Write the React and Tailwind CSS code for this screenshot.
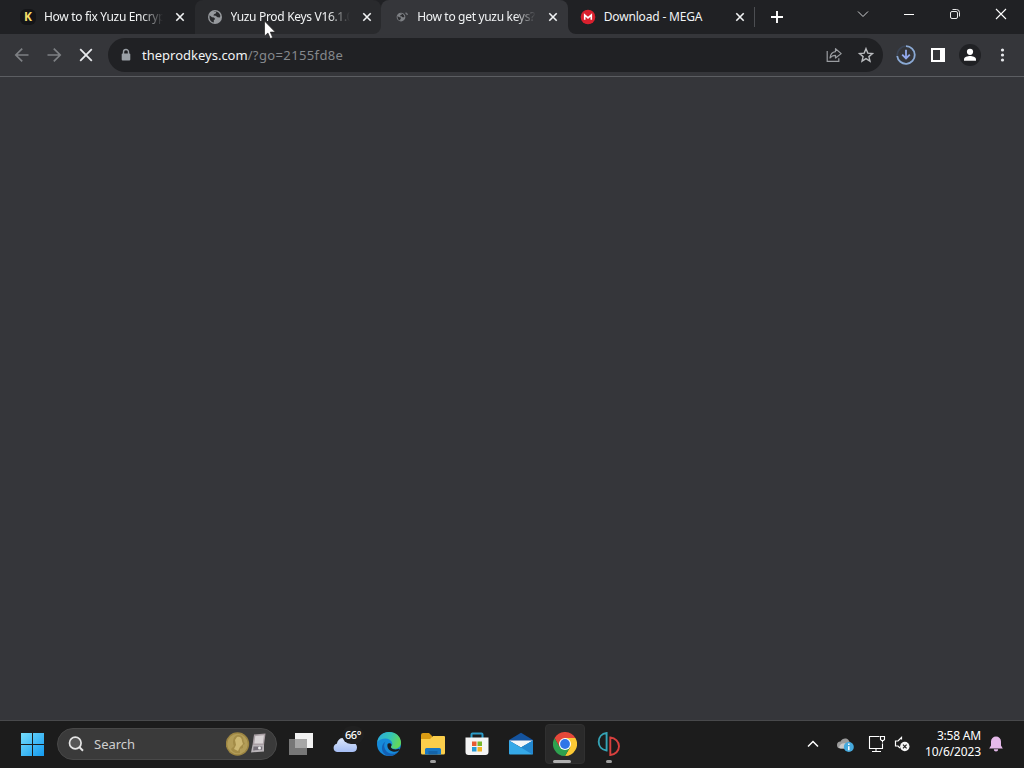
import React from 'react';

const tabs = [
  { title: 'How to fix Yuzu Encryption', icon: 'k' },
  { title: 'Yuzu Prod Keys V16.1.0', icon: 'globe', hover: true },
  { title: 'How to get yuzu keys?', icon: 'loading', active: true },
  { title: 'Download - MEGA', icon: 'mega' },
];

const Globe = ({ className }) => (
  <svg className={className} viewBox="0 0 16 16">
    <circle cx="8" cy="8" r="7" fill="#96999d" />
    <path d="M2.600 6.200 5 8.200l2 .2 1.200 1.500-1.400 1.400v2.200C3.800 13 2 10.500 2.600 6.200z" fill="#292a2d" />
    <path d="M6.500 2.800 9.200 2.800 9 4.200 7 5.200 6.400 6.600 8.600 6.800 10.500 8.300 12.800 8.500 13.400 7C13 4.800 11 2.500 8 2.300z" fill="#292a2d" />
  </svg>
);

const TabIcon = ({ name }) => {
  if (name === 'k') {
    return (
      <span className="w-4 h-4 rounded-md bg-[#141518] text-[#f3dc68] text-[12px] leading-4 font-bold text-center">K</span>
    );
  }
  if (name === 'globe') return <Globe className="w-4 h-4" />;
  if (name === 'loading') {
    return (
      <span className="w-4 h-4 pl-[3px] flex items-center opacity-75">
        <Globe className="w-[10px] h-[10px] shrink-0" />
        <svg className="w-[4px] h-4 shrink-0 -ml-px" viewBox="0 0 4 16">
          <path d="M.5 4q1.500 .3 1.900 2" fill="none" stroke="#8a8d91" strokeWidth="1.300" />
        </svg>
      </span>
    );
  }
  return (
    <svg className="w-4 h-4" viewBox="0 0 16 16">
      <circle cx="8" cy="8" r="7.300" fill="#d9202e" />
      <path d="M4.700 10.700V6L8 8.900 11.300 6v4.700" fill="none" stroke="#fff" strokeWidth="1.600" />
    </svg>
  );
};

const Tab = ({ tab }) => (
  <div
    className={`relative w-[186.600px] h-[34px] flex items-center pl-3 shrink-0 ${
      tab.active ? 'bg-[#35363a] rounded-t-lg' : tab.hover ? 'bg-[#292a2d] rounded-t-lg' : ''
    }`}
  >
    <TabIcon name={tab.icon} />
    <span
      className={`ml-2 w-[119px] overflow-hidden whitespace-nowrap text-[12px] leading-4 text-[#f1f3f4] ${
        tab.icon === 'mega'
          ? 'tracking-[-0.18px]'
          : 'tracking-[-0.32px] [mask-image:linear-gradient(to_right,#000_82%,transparent)]'
      }`}
    >
      {tab.title}
    </span>
    <svg className="ml-[9px] w-4 h-4" viewBox="0 0 16 16">
      <path d="m4.300 4.300 7.400 7.400m0-7.400-7.400 7.400" stroke="#f1f3f4" strokeWidth="1.600" />
    </svg>
    {tab.active && (
      <>
        <svg className="absolute -left-2 bottom-0 w-2 h-2" viewBox="0 0 8 8">
          <path d="M8 0v8H0a8 8 0 0 0 8-8z" fill="#35363a" />
        </svg>
        <svg className="absolute -right-2 bottom-0 w-2 h-2" viewBox="0 0 8 8">
          <path d="M0 0v8h8a8 8 0 0 1-8-8z" fill="#35363a" />
        </svg>
      </>
    )}
  </div>
);

const WindowButtons = () => (
  <div className="ml-auto flex h-7">
    <svg className="w-[46px] h-7" viewBox="0 0 46 28" fill="none" stroke="#d0d1d3">
      <path d="m18 11.500 5 5 5-5" />
    </svg>
    <svg className="w-[46px] h-7" viewBox="0 0 46 28" fill="none" stroke="#fff">
      <path d="M18 14.500h10" />
    </svg>
    <svg className="w-[46px] h-7" viewBox="0 0 46 28" fill="none" stroke="#e8e8e8">
      <rect x="18.500" y="11.500" width="7" height="7" rx="1.500" />
      <path d="M20.500 9.500h4a3 3 0 0 1 3 3v4" />
    </svg>
    <svg className="w-[46px] h-7" viewBox="0 0 46 28" fill="none" stroke="#fff">
      <path d="m18 9 10 10m0-10-10 10" strokeWidth="1.100" />
    </svg>
  </div>
);

const Toolbar = () => (
  <div className="h-[43px] flex items-center pl-1.5 pr-1.5 bg-[#35363a] border-b border-[#5c5e62]">
    <svg className="w-8 h-8" viewBox="0 0 32 32" fill="none" stroke="#7e8084" strokeWidth="1.700">
      <path d="M22.500 16H9.800m6.400-6.400L9.800 16l6.400 6.400" />
    </svg>
    <svg className="w-8 h-8" viewBox="0 0 32 32" fill="none" stroke="#7e8084" strokeWidth="1.700">
      <path d="M9.500 16h12.700m-6.400-6.400 6.400 6.400-6.400 6.400" />
    </svg>
    <svg className="w-8 h-8" viewBox="0 0 32 32" fill="none" stroke="#e8eaed" strokeWidth="1.800">
      <path d="m10.200 10.200 11.600 11.600m0-11.600L10.200 21.800" />
    </svg>

    <div className="ml-1.5 w-[775px] h-[34px] rounded-full bg-[#202124] flex items-center pl-2.5 pr-[1px]">
      <svg className="w-4 h-4" viewBox="0 0 16 16">
        <rect x="3.700" y="6.400" width="8.600" height="7.200" rx="1" fill="#9aa0a6" />
        <path d="M5.500 7V5a2.500 2.500 0 0 1 5 0v2" fill="none" stroke="#9aa0a6" strokeWidth="1.400" />
      </svg>
      <div className="ml-2 flex text-[13px] leading-5 whitespace-nowrap">
        <span className="text-[#f1f3f4]">theprodkeys.com</span>
        <span className="text-[#85888c] tracking-[0.38px]">/?go=2155fd8e</span>
      </div>
      <svg className="ml-auto w-8 h-8" viewBox="0 0 32 32" fill="none" stroke="#9a9da1" strokeWidth="1.200">
        <path d="M9.200 12v10.300h11.600v-3" />
        <path d="M17.500 9.700 23.200 14.600 17.500 19v-2.700c-2.600 0-4.100.8-5.500 2.700.4-3.800 2.300-6 5.500-6.400z" strokeLinejoin="round" />
      </svg>
      <svg className="w-8 h-8" viewBox="0 0 32 32" fill="none" stroke="#b9bbbe" strokeWidth="1.400">
        <path d="m16 9.700 1.800 4.400 4.700.4-3.600 3.100 1.100 4.600-4-2.500-4 2.500 1.100-4.600-3.600-3.100 4.700-.4z" />
      </svg>
    </div>

    <div className="ml-auto flex">
      <svg className="w-8 h-8" viewBox="0 0 32 32" fill="none">
        <circle cx="16" cy="16" r="8.800" stroke="#3b4454" strokeWidth="1.800" />
        <path d="M16 7.200A8.800 8.800 0 1 1 7.200 17" stroke="#8ba9d3" strokeWidth="1.800" />
        <path d="M16 10.800v8.400m-3.800-3.600 3.800 3.800 3.800-3.800" stroke="#93a9ee" strokeWidth="1.800" />
      </svg>
      <svg className="w-8 h-8" viewBox="0 0 32 32">
        <path fillRule="evenodd" d="M9 9h14v14H9zM11 11v10h7V11z" fill="#fff" />
      </svg>
      <svg className="w-8 h-8" viewBox="0 0 32 32">
        <circle cx="16" cy="16" r="11" fill="#202124" />
        <circle cx="16" cy="12.800" r="3.100" fill="#fff" />
        <path d="M10 21.800v-1.500c0-2 3.600-3.200 6-3.200s6 1.200 6 3.200v1.500z" fill="#fff" />
      </svg>
      <svg className="w-8 h-8" viewBox="0 0 32 32" fill="#e8eaed">
        <circle cx="16.500" cy="11" r="1.600" />
        <circle cx="16.500" cy="16" r="1.600" />
        <circle cx="16.500" cy="21" r="1.600" />
      </svg>
    </div>
  </div>
);

const SearchBox = () => (
  <div className="ml-3 w-[220px] h-8 rounded-full bg-[#3a3a3a] border border-[#484848] flex items-center pl-[9px] pr-2">
    <svg className="w-[18px] h-[18px]" viewBox="0 0 18 18" fill="none" stroke="#e6e6e6" strokeWidth="1.700">
      <circle cx="8.300" cy="8" r="5.800" fill="#565656" />
      <path d="m12.500 12.300 3.500 3.500" strokeWidth="2" />
    </svg>
    <span className="ml-[9px] text-[13px] leading-5 text-[#cfcfcf]">Search</span>
    <svg className="ml-auto w-[42px] h-[26px]" viewBox="0 0 42 26">
      <circle cx="11.500" cy="13" r="11.700" fill="#9c8542" />
      <circle cx="11.500" cy="13" r="10.300" fill="#b39d58" />
      <path d="M12 4c4 0 6 3 5.500 6l1.500 3-2 1v3l-3 1v4c-4 1-8-1-9-4l3-3c-2-4-1-10 4-11z" fill="#a38c48" />
      <path d="M11 6c3-1 5 1 5 4l1 3-3 3-2 4-4-2 2-4-1-5z" fill="#cdb873" />
      <path d="M28 3.500 39.500 2.500 38 14H26.500z" fill="#a99fa4" />
      <path d="m29.300 5 8.600-.8-1 8.400h-8.600z" fill="#d8d3d5" />
      <path d="m26.500 14 11.500 0 0 6.500-13 1z" fill="#b9b4b8" />
      <path d="m27.500 15.500 8.800 0-.2 3.300-9 .6z" fill="#77717a" />
      <circle cx="33.500" cy="17" r="1.500" fill="#eee" />
    </svg>
  </div>
);

const AppCell = ({ children, active, running }) => (
  <div className="relative w-11 h-[46px] flex items-center justify-center">
    <div
      className={`w-10 h-10 flex items-center justify-center rounded ${
        active ? 'bg-[#2a2a2a] border border-[#303030]' : ''
      }`}
    >
      {children}
    </div>
    {active && <span className="absolute bottom-[4px] left-[10px] w-[18px] h-[3px] rounded-full bg-[#b0b0b0]" />}
    {running && <span className="absolute bottom-[4px] left-[19px] w-[6px] h-[3px] rounded-full bg-[#a0a0a0]" />}
  </div>
);

const TaskbarApps = () => (
  <div className="ml-0.5 flex">
    <AppCell>
      <svg className="w-6 h-6" viewBox="0 0 24 24">
        <path d="M6 1h18v15H6z" fill="#f2f2f2" />
        <path d="M0 7h18v16H0z" fill="#777" />
        <path d="M6 7h12v9H6z" fill="#a6a6a6" />
      </svg>
    </AppCell>
    <AppCell>
      <svg className="w-6 h-6" viewBox="0 0 24 24">
        <defs>
          <linearGradient id="cloud" x1="0" y1="0" x2="0" y2="1">
            <stop offset="0" stopColor="#dce7fb" />
            <stop offset="1" stopColor="#a5bdf4" />
          </linearGradient>
        </defs>
        <path d="M4 20a4.200 4.200 0 0 1-.2-8.200C5 6 10 4.500 14 7.500c1 1 1.700 2 2 3.500 5-1.500 8 1 8 4.500 0 3-2 4.500-4.500 4.500z" fill="url(#cloud)" />
      </svg>
      <span className="absolute left-[19px] top-[5px] w-[22px] h-[18px] rounded-full bg-[#202020] text-white text-[11px] leading-[18px] text-center font-medium tracking-[-0.4px]">
        66°
      </span>
    </AppCell>
    <AppCell>
      <svg className="w-6 h-6" viewBox="0 0 24 24">
        <defs>
          <linearGradient id="edgeTop" x1="0" y1="0" x2="1" y2=".3">
            <stop offset="0" stopColor="#2ba9e0" />
            <stop offset=".6" stopColor="#35c5b2" />
            <stop offset="1" stopColor="#62d65b" />
          </linearGradient>
        </defs>
        <circle cx="12" cy="12" r="12" fill="#168ada" />
        <path d="M.3 10C1 4 6 0 12 0c7 0 12 4.800 12 10.500 0 4-3 6.300-6.500 6.300-2.500 0-4-1-3.500-2.300 1-1 1.500-2 1.200-3.500C14.500 8 11.500 6.500 8.500 6.500 5 6.500 2 8 .3 10z" fill="url(#edgeTop)" />
        <path d="M8.700 9.500C6 12 7 18 11 20.500c4 2.500 8.500 1.300 11.300-2.300C20 22 16.500 24 12.300 24 7 23.500 4.500 19 5 15c.3-2.500 1.700-4.500 3.700-5.500z" fill="#1460b5" />
        <path d="M10.600 12c-1 3.500 1.500 6.800 5 7.500 3 .6 5 0 6.800-1.500.6-1-.1-1.500-1-1-3 1-6.500.3-7.400-1.500-.4-1 .6-1.600.6-2.800-.8-1.700-3.400-1.800-4-.7z" fill="#1b1d20" />
      </svg>
    </AppCell>
    <AppCell running>
      <svg className="w-6 h-6" viewBox="0 0 24 24">
        <path d="M0 3a2 2 0 0 1 2-2h6l3 3v4H0z" fill="#d99b13" />
        <path d="M0 7h9l3-3h11a1 1 0 0 1 1 1v16a1.500 1.500 0 0 1-1.500 1.500h-21A1.500 1.500 0 0 1 0 21z" fill="#fbce4b" />
        <path d="M4 22.500v-5A1.500 1.500 0 0 1 5.500 16h13a1.500 1.500 0 0 1 1.500 1.500v5z" fill="#1877c4" />
        <path d="M7.500 19h9v3.500h-9z" fill="#1464a9" />
      </svg>
    </AppCell>
    <AppCell>
      <svg className="w-6 h-6" viewBox="0 0 24 24">
        <path d="M6.500 6V2.500A1 1 0 0 1 7.500 1.500h9a1 1 0 0 1 1 1V6" fill="none" stroke="#2b9bc8" strokeWidth="2" />
        <path d="M.5 5.500h23V20a3 3 0 0 1-3 3h-17a3 3 0 0 1-3-3z" fill="#f4f4f4" />
        <path d="M7 9.500h4.500V14H7z" fill="#e75a33" />
        <path d="M12.500 9.500H17V14h-4.500z" fill="#78b62a" />
        <path d="M7 15h4.500v4.500H7z" fill="#2799d6" />
        <path d="M12.500 15H17v4.500h-4.500z" fill="#f2b322" />
      </svg>
    </AppCell>
    <AppCell>
      <svg className="w-6 h-6" viewBox="0 0 24 24">
        <path d="M0 8 12 .8 24 8v5H0z" fill="#14539e" />
        <path d="M0 8.500h24L12 15.500z" fill="#f3f6f8" />
        <path d="M0 8.500 12 15.500 24 8.500v13a1 1 0 0 1-1 1H1a1 1 0 0 1-1-1z" fill="#35a9e8" />
        <path d="m24 8.500-12 7 11.500 7 .5-1z" fill="#2388d0" />
      </svg>
    </AppCell>
    <AppCell active>
      <svg className="w-6 h-6 shrink-0" viewBox="0 0 24 24">
        <path d="M12 12V6h10.400A12 12 0 0 1 12 24l5.200-9z" fill="#fcc934" />
        <path d="m12 12-5.200 3L1.600 6A12 12 0 0 0 12 24l5.200-9z" fill="#2ea14f" />
        <path d="M12 12 6.800 15 1.600 6A12 12 0 0 1 22.400 6H12z" fill="#e5483a" />
        <circle cx="12" cy="12" r="6" fill="#fff" />
        <circle cx="12" cy="12" r="4.900" fill="#2f75e8" />
      </svg>
    </AppCell>
    <AppCell running>
      <svg className="w-6 h-6" viewBox="0 0 24 24" fill="none" strokeWidth="1.900">
        <path d="M9.600 1v17.500C4.800 18 1.700 14.500 1.700 9.800S4.800 1.500 9.600 1z" stroke="#35a3b5" />
        <path d="M13.300 5.500V23c5-.5 8.700-4 8.700-8.700s-3.700-8.300-8.700-8.800z" stroke="#d8403e" />
      </svg>
    </AppCell>
  </div>
);

const Tray = () => (
  <div className="ml-auto pr-5 flex items-center">
    <svg className="w-4 h-4" viewBox="0 0 16 16" fill="none" stroke="#fff" strokeWidth="1.500">
      <path d="m3 10.500 5-5 5 5" />
    </svg>
    <svg className="ml-4 w-[18px] h-[18px]" viewBox="0 0 18 18">
      <path d="M3.500 13.500a3.500 3.500 0 0 1 0-7C5 3.500 9 2.500 11.500 5L13 7.500v6z" fill="#9b9b9b" />
      <path d="M2 12.500c1-4 4-5 7-4l3 5H3.500z" fill="#c9c9c9" />
      <circle cx="11.800" cy="12" r="5" fill="#45a9dd" />
      <path d="M11.800 8.500v1.500m0 1.200v4" stroke="#fff" strokeWidth="1.500" />
    </svg>
    <svg className="ml-[13px] w-[18px] h-[18px]" viewBox="0 0 18 18" fill="none" stroke="#fff" strokeWidth="1.100">
      <path d="M11.500 1.500h-10v12h13v-5M8 13.500v2.500m-4 .5h9" />
      <path d="M12.500 1.500h4v3l-1 1h-2l-1-1zM14.500 5.500v2" />
    </svg>
    <svg className="ml-2 w-[17px] h-[18px]" viewBox="0 0 17 18">
      <path d="M7.500 4.500V2.500L4 6H1.500v5H4l2 2" fill="none" stroke="#fff" strokeWidth="1.200" />
      <circle cx="10.800" cy="11.500" r="4.700" fill="#f5f5f5" />
      <path d="m9 9.700 3.600 3.600m0-3.600L9 13.300" stroke="#1c1c1c" strokeWidth="1.200" />
    </svg>
    <div className="ml-[10px] w-[60px] flex flex-col items-end text-[12px] leading-4 text-white whitespace-nowrap">
      <span className="tracking-[-0.2px]">3:58 AM</span>
      <span className="tracking-[-0.12px]">10/6/2023</span>
    </div>
    <svg className="ml-[7px] w-4 h-4" viewBox="0 0 16 16">
      <path d="M8 .5a5 5 0 0 1 5 5v4l1.800 3H1.200l1.800-3v-4a5 5 0 0 1 5-5z" fill="#e5b9ea" />
      <path d="M5.800 13.200h4.400a2.200 2.200 0 0 1-4.400 0z" fill="#e5b9ea" />
    </svg>
  </div>
);

const Taskbar = () => (
  <div className="h-12 flex items-center pl-[21px] pb-px bg-[#1c1c1c] border-t border-[#48494b]">
    <svg className="w-6 h-6" viewBox="0 0 24 24">
      <defs>
        <linearGradient id="win" x1="0" y1="0" x2="1" y2="1">
          <stop offset="0" stopColor="#75dcfa" />
          <stop offset="1" stopColor="#139af0" />
        </linearGradient>
      </defs>
      <path d="M0 1h11v11H0zM12 1h11v11H12zM0 13h11v11H0zM12 13h11v11H12z" fill="url(#win)" />
    </svg>
    <SearchBox />
    <TaskbarApps />
    <Tray />
  </div>
);

export default function App() {
  return (
    <div className="relative w-[1024px] h-[768px] flex flex-col overflow-hidden bg-[#35363a] font-['Noto_Sans','Open_Sans',sans-serif]">
      <div className="h-[34px] flex pl-2 bg-[#202124]">
        {tabs.map((tab) => (
          <Tab key={tab.title} tab={tab} />
        ))}
        <div className="w-px h-5 mt-[7px] bg-[#4c4e52]" />
        <svg className="ml-[14px] mt-[9px] w-4 h-4" viewBox="0 0 16 16">
          <path d="M8 2v12M2 8h12" stroke="#fff" strokeWidth="1.900" />
        </svg>
        <WindowButtons />
      </div>
      <Toolbar />
      <main className="flex-1" />
      <Taskbar />

      {/* Mouse pointer */}
      <svg className="absolute left-[264px] top-[20px] w-[13px] h-5" viewBox="0 0 13 20">
        <path d="M.5 1v15.200l3.400-3.200 2.400 5.600 2.400-1-2.400-5.500h5z" fill="#fff" stroke="#222" strokeWidth=".7" />
      </svg>
    </div>
  );
}
